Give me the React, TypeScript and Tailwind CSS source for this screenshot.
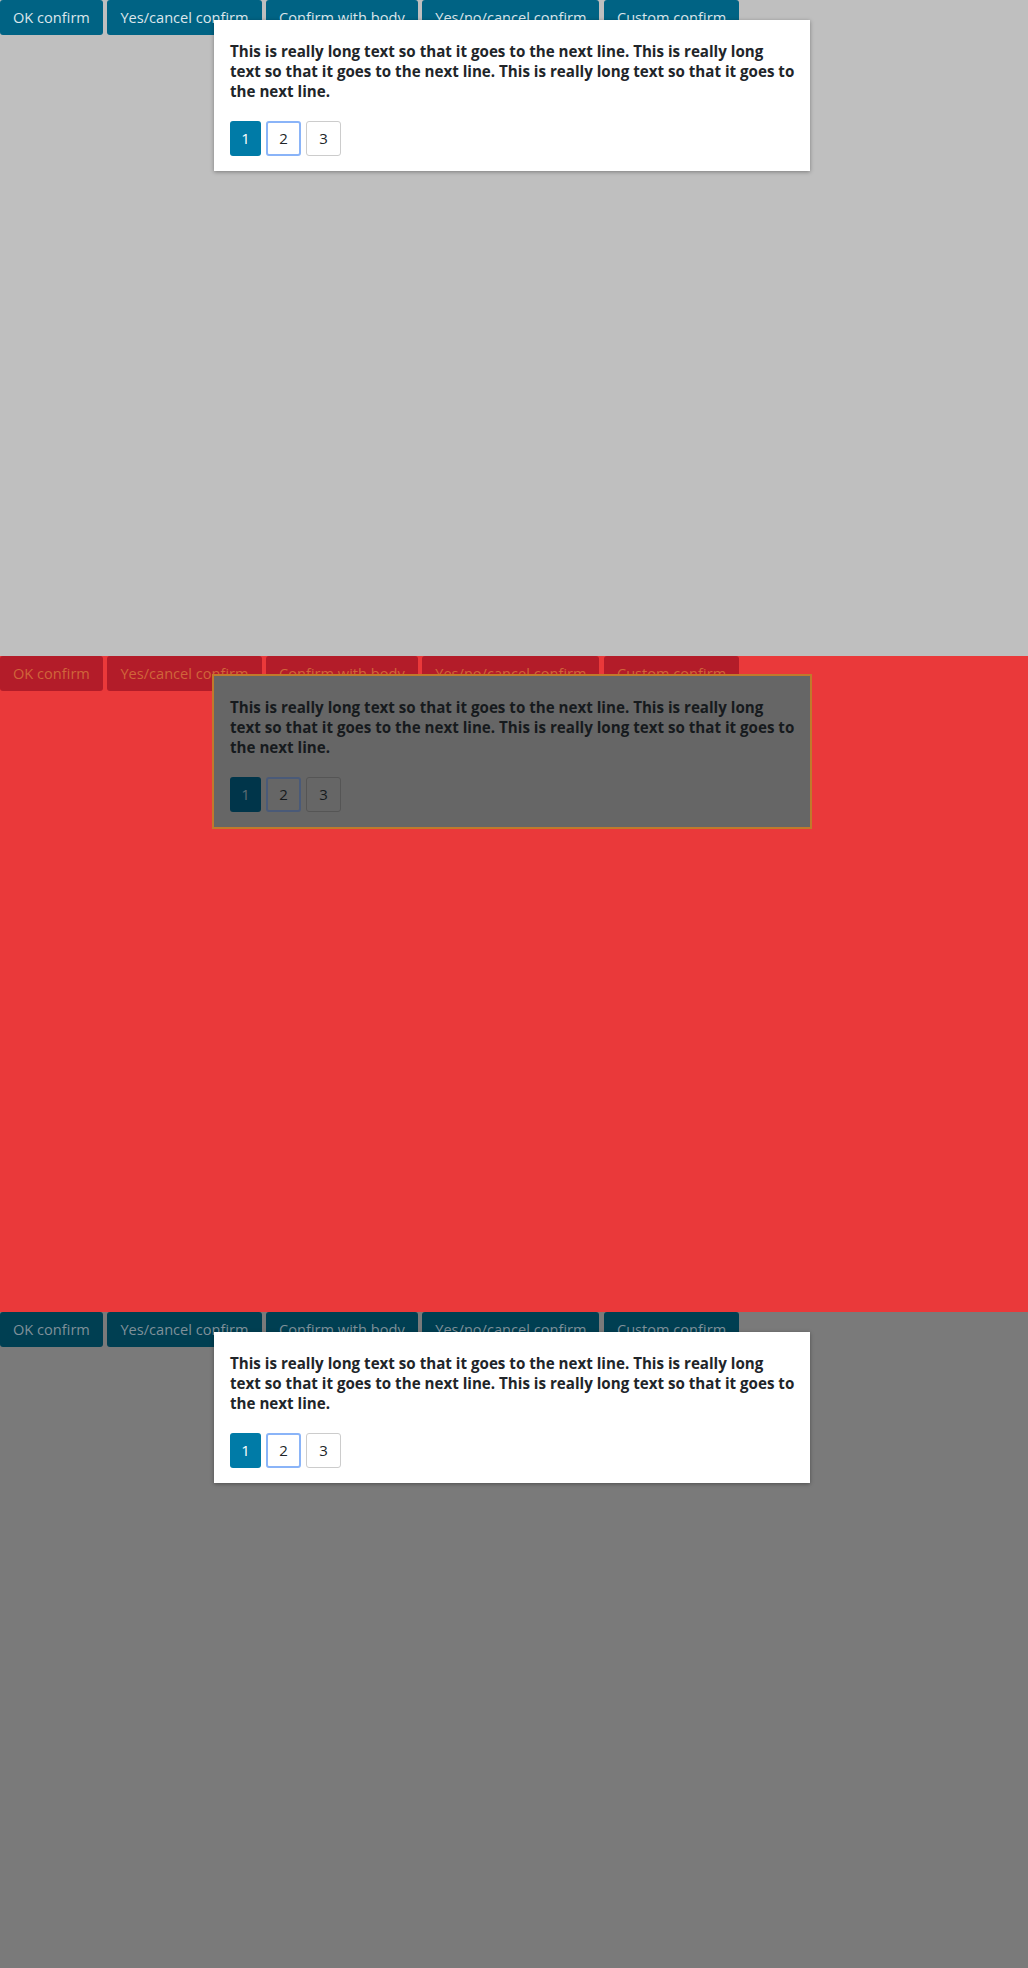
const labels = [
  "OK confirm",
  "Yes/cancel confirm",
  "Confirm with body",
  "Yes/no/cancel confirm",
  "Custom confirm",
];

const longText =
  "This is really long text so that it goes to the next line. This is really long text so that it goes to the next line. This is really long text so that it goes to the next line.";

type Theme = {
  page: string;
  button: string;
  modal: string;
  text: string;
  first: string;
  second: string;
  third: string;
};

const themes: Theme[] = [
  {
    page: "bg-[#bfbfbf]",
    button: "bg-[#006384] text-[#dce6eb]",
    modal: "bg-white shadow-[0_1px_4px_rgba(0,0,0,0.35)]",
    text: "text-[#212529]",
    first: "bg-[#007ba7] text-white",
    second: "border-2 border-[#8ab4f8] text-[#212529]",
    third: "border border-[#cccccc] text-[#212529]",
  },
  {
    page: "bg-[#ea393a]",
    button: "bg-[#b31c29] text-[#d0653a]",
    modal: "bg-[#666666] outline-2 outline-[#c07a2c]",
    text: "text-[#161a1d]",
    first: "bg-[#00354a] text-[#5d6d75]",
    second: "border-2 border-[#4a5a78] text-[#161a1d]",
    third: "border border-[#555555] text-[#161a1d]",
  },
  {
    page: "bg-[#7a7a7a]",
    button: "bg-[#003f52] text-[#7f9099]",
    modal: "bg-white shadow-[0_1px_4px_rgba(0,0,0,0.35)]",
    text: "text-[#212529]",
    first: "bg-[#007ba7] text-white",
    second: "border-2 border-[#8ab4f8] text-[#212529]",
    third: "border border-[#cccccc] text-[#212529]",
  },
];

function Panel({ t }: { t: Theme }) {
  return (
    <div className={`relative h-[656px] ${t.page}`}>
      {/* confirm buttons */}
      <div className="flex gap-[4.5px]">
        {labels.map((l) => (
          <button
            key={l}
            className={`h-[35px] rounded-[3px] px-[13px] text-[14.6px] ${t.button}`}
          >
            {l}
          </button>
        ))}
      </div>

      {/* dialog on top */}
      <div
        className={`absolute left-[214px] top-[20px] w-[596px] px-4 pt-[21px] pb-[15px] ${t.modal}`}
      >
        <p className={`w-[566px] text-[15.15px] font-bold leading-[20px] ${t.text}`}>
          {longText}
        </p>
        <div className="mt-5 flex gap-[5px]">
          <button
            className={`h-[35px] w-[31px] rounded-[3px] text-[15px] ${t.first}`}
          >
            1
          </button>
          <button
            className={`h-[35px] w-[35px] rounded-[3px] text-[15px] ${t.second}`}
          >
            2
          </button>
          <button
            className={`h-[35px] w-[35px] rounded-[3px] text-[15px] ${t.third}`}
          >
            3
          </button>
        </div>
      </div>
    </div>
  );
}

export default function App() {
  return (
    <div className="w-[1028px] font-['Open_Sans',sans-serif]">
      {themes.map((t, i) => (
        <Panel key={i} t={t} />
      ))}
    </div>
  );
}
